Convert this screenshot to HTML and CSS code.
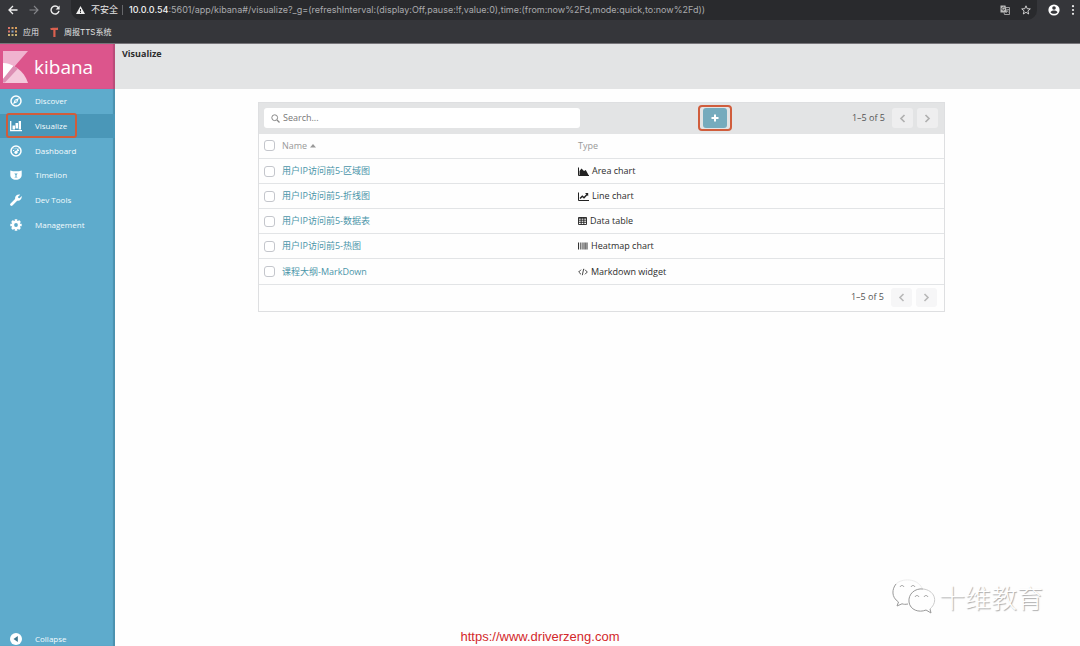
FILE: index.html
```html
<!DOCTYPE html>
<html lang="zh-CN">
<head>
<meta charset="utf-8">
<title>Visualize - Kibana</title>
<link rel="stylesheet" href="styles.css">
</head>
<body>
<header class="browser">
  <div class="browser-bar">
    <button class="chrome-btn" aria-label="Back"><svg width="10" height="10" viewBox="0 0 10 10"><path d="M9.5 5H1.2M5 1 1 5l4 4" fill="none" stroke="#eee" stroke-width="1.3"/></svg></button>
    <button class="chrome-btn" aria-label="Forward"><svg width="10" height="10" viewBox="0 0 10 10"><path d="M.5 5h8.3M5 1l4 4-4 4" fill="none" stroke="#85868a" stroke-width="1.1"/></svg></button>
    <button class="chrome-btn" aria-label="Reload"><svg width="10" height="10" viewBox="0 0 10 10"><path d="M8.3 2.6A4 4 0 1 0 9 5.8" fill="none" stroke="#eee" stroke-width="1.4"/><path d="M9.6.4v4H5.6z" fill="#eee"/></svg></button>
    <div class="omnibox">
      <svg width="9" height="8" viewBox="0 0 9 8"><path d="M4.5 0 9 8H0z" fill="#eee"/><path d="M4.5 3v2.400M4.5 6v1" stroke="#292a2d"/></svg>
      <span class="insecure">不安全</span>
      <span class="url"><b>10.0.0.54</b>:5601/app/kibana#/visualize?_g=(refreshInterval:(display:Off,pause:!f,value:0),time:(from:now%2Fd,mode:quick,to:now%2Fd))</span>
      <button class="chrome-btn" aria-label="Translate"><svg width="10" height="10" viewBox="0 0 10 10"><path d="M.5.5h5L7 7.500H.5z" fill="#bbb"/><path d="M6 2.500h3.500v7H4.500L4 7.500" fill="none" stroke="#bbb" stroke-width=".8"/><path d="M4.600 3A1.500 1.500 0 1 0 4.700 4.500H3.500" fill="none" stroke="#333" stroke-width=".8"/><path d="M6.500 4.500h2.500M7.800 4v.5M8.600 4.500 6.500 7.500M7 5.500l1.600 2" stroke="#bbb" stroke-width=".6"/></svg></button>
      <button class="chrome-btn" aria-label="Bookmark"><svg width="10" height="10" viewBox="0 0 10 10"><path d="M5 .8 6.200 3.700l3.100.2-2.400 2L7.700 9 5 7.300 2.300 9l.8-3.100-2.400-2 3.100-.2z" fill="none" stroke="#ddd" stroke-width=".9"/></svg></button>
    </div>
    <button class="chrome-btn" aria-label="Profile"><svg width="12" height="12" viewBox="0 0 12 12"><circle cx="6" cy="6" r="5.600" fill="#fff"/><circle cx="6" cy="4" r="1.800" fill="#35363a"/><path d="M2.500 8.300C3.300 6 8.700 6 9.500 8.300 8 10.300 4 10.300 2.500 8.300z" fill="#35363a"/></svg></button>
    <button class="chrome-btn" aria-label="Menu"><svg width="4" height="10" viewBox="0 0 4 10"><g fill="#eee"><circle cx="2" cy="1.200" r="1.100"/><circle cx="2" cy="5" r="1.100"/><circle cx="2" cy="8.800" r="1.100"/></g></svg></button>
  </div>
  <nav class="bookmarks">
    <a href="#"><svg width="9" height="9" viewBox="0 0 9 9"><path d="M0 1h2M0 4.500h2" stroke="#d8746a" stroke-width="2"/><path d="M3.500 1h2M7 1h2M7 4.500h2" stroke="#d9a05f" stroke-width="2"/><path d="M3.500 4.500h2" stroke="#8aa4c8" stroke-width="2"/><path d="M0 8h2M3.500 8h2M7 8h2" stroke="#c9b276" stroke-width="2"/></svg>应用</a>
    <a href="#"><svg width="8" height="10" viewBox="0 0 8 10"><path d="M0 1.500C2 0 5 1 8 .5V3L5.500 3v7H3.300V3H1z" fill="#d9604f"/></svg>周报TTS系统</a>
  </nav>
</header>
<div class="app">
  <aside class="sidebar">
    <a class="logo" href="#" aria-label="kibana">
      <svg width="25" height="32" viewBox="0 0 25 32"><path d="M0 0h25L11 16 0 28z" fill="#f0b3cf"/><path d="M0 12c10 1 21 7 25 20H0z" fill="#f4c9dc"/><path d="M0 12c4 0 7 1 10.500 3L0 28z" fill="#fff"/><path d="M10.500 15 15 17.500 2 31.500H0V28z" fill="#dc8fb4"/></svg>
      <span>kibana</span>
    </a>
    <nav class="menu">
      <a href="#"><svg width="12" height="12" viewBox="0 0 12 12"><circle cx="6" cy="6" r="5" fill="none" stroke="#fff" stroke-width="1.500"/><path d="M9 3 7.200 7.200 3 9l1.800-4.200z" fill="#fff"/><circle cx="6" cy="6" r=".8" fill="#5eabcc"/></svg>Discover</a>
      <a class="active" href="#"><svg width="12" height="12" viewBox="0 0 12 12"><path d="M.7 1v9.700H12" fill="none" stroke="#fff" stroke-width="1.300"/><path d="M2.500 5.500H5v4H2.500zM5.500 3H8v5.500H5.500zM8.700 1h2.300v8.500H8.700z" fill="#fff"/></svg>Visualize</a>
      <a href="#"><svg width="12" height="12" viewBox="0 0 12 12"><circle cx="6" cy="6" r="5" fill="none" stroke="#fff" stroke-width="1.500"/><path d="M3 5.500h1.200M4 3.500l.8.800M6 2.800v1M9 5.500H8" stroke="#fff"/><path d="M8.300 3.500 6.500 7" stroke="#fff" stroke-width="1.300"/><circle cx="6" cy="7.300" r="1.600" fill="#fff"/></svg>Dashboard</a>
      <a href="#"><svg width="12" height="12" viewBox="0 0 12 12"><path d="M.3 1.500 3 2.300h6l2.700-.8V6c0 3-2.500 4.800-5.700 4.800S.3 9 .3 6z" fill="#fff"/><path d="M4.300 4.500h3.400L6.500 6v1.800l1.300.8H4.200l1.300-.8V6z" fill="#5eabcc"/></svg>Timelion</a>
      <a href="#"><svg width="12" height="12" viewBox="0 0 12 12"><path d="M1.500 10.500 6 6" stroke="#fff" stroke-width="2.700" stroke-linecap="round"/><path d="M10.200.7 8 2.700l.3 1.200 1.300.3 2.100-2.100C12.200 5 9.700 7.500 7 6.600L5.200 5C4.500 2.300 7 0 10.200.7z" fill="#fff"/></svg>Dev Tools</a>
      <a href="#"><svg width="12" height="12" viewBox="0 0 12 12"><path d="M6 .3v11.400M.3 6h11.400M2 2l8 8M10 2l-8 8" stroke="#fff" stroke-width="2.600"/><circle cx="6" cy="6" r="4.300" fill="#fff"/><circle cx="6" cy="6" r="1.900" fill="#5eabcc"/></svg>Management</a>
      <span class="mark mark-nav"></span>
    </nav>
    <button class="collapse"><svg width="12" height="12" viewBox="0 0 12 12"><circle cx="6" cy="6" r="6" fill="#fff"/><path d="M7.800 3v6L3.500 6z" fill="#3f7890"/></svg>Collapse</button>
  </aside>
  <main class="main">
    <div class="page-head"><h1>Visualize</h1></div>
    <div class="content">
    <section class="panel">
      <div class="toolbar">
        <label class="search">
          <svg width="9" height="9" viewBox="0 0 9 9"><circle cx="3.700" cy="3.700" r="2.900" fill="none" stroke="#888" stroke-width="1"/><path d="m6 6 2.500 2.500" stroke="#888" stroke-width="1.200"/></svg>
          <input type="text" placeholder="Search..." aria-label="Search">
        </label>
        <div class="add-wrap"><button class="add" aria-label="Create new visualization"><svg width="8" height="8" viewBox="0 0 8 8"><path d="M4 .5v7M.5 4h7" stroke="#fff" stroke-width="2"/></svg></button><span class="mark mark-add"></span></div>
        <div class="pager"><span>1–5 of 5</span>
          <button aria-label="Previous page"><svg width="7" height="9" viewBox="0 0 7 9"><path d="M5.500 1 2 4.500 5.500 8" fill="none" stroke="#b0b0b0" stroke-width="1.700"/></svg></button>
          <button aria-label="Next page"><svg width="7" height="9" viewBox="0 0 7 9"><path d="M1.500 1 5 4.500 1.500 8" fill="none" stroke="#b0b0b0" stroke-width="1.700"/></svg></button>
        </div>
      </div>
      <table class="list">
        <thead><tr><th class="check"><input type="checkbox" aria-label="Select all"></th><th class="name">Name <svg width="6" height="4" viewBox="0 0 6 4"><path d="M3 0 6 3.500H0z" fill="#999"/></svg></th><th>Type</th></tr></thead>
        <tbody>
          <tr><td class="check"><input type="checkbox" aria-label="用户IP访问前5-区域图"></td><td><a href="#">用户IP访问前5-区域图</a></td><td><span class="type"><svg width="11" height="9" viewBox="0 0 11 9"><path d="M.5.500v8H11" fill="none" stroke="#222"/><path d="M1.500 8V4L3.500 1.500 6 4l1.800-1L10.500 8z" fill="#222"/></svg>Area chart</span></td></tr>
          <tr><td class="check"><input type="checkbox" aria-label="用户IP访问前5-折线图"></td><td><a href="#">用户IP访问前5-折线图</a></td><td><span class="type"><svg width="11" height="9" viewBox="0 0 11 9"><path d="M.5.500v8H11" fill="none" stroke="#222"/><path d="m2 6.500 2.300-2.300 1.700 1.500 3-3.200" fill="none" stroke="#222" stroke-width="1.400"/><path d="M7 1h3.200v3.200z" fill="#222"/></svg>Line chart</span></td></tr>
          <tr><td class="check"><input type="checkbox" aria-label="用户IP访问前5-数据表"></td><td><a href="#">用户IP访问前5-数据表</a></td><td><span class="type"><svg width="9" height="8" viewBox="0 0 9 8"><path d="M.5.500h8v7h-8zM.5 1.200h8M.5 3.200h8M.5 5.300h8M3.200.5v7M5.800.5v7" fill="none" stroke="#222" stroke-width=".9"/></svg>Data table</span></td></tr>
          <tr><td class="check"><input type="checkbox" aria-label="用户IP访问前5-热图"></td><td><a href="#">用户IP访问前5-热图</a></td><td><span class="type"><svg width="10" height="8" viewBox="0 0 10 8"><path d="M.5.500v7M6 .5v7M9 .5v7" stroke="#333"/><path d="M2.500.5v7M4.200.5v7M7.500.5v7" stroke="#777" stroke-width="1.200"/></svg>Heatmap chart</span></td></tr>
          <tr><td class="check"><input type="checkbox" aria-label="课程大纲-MarkDown"></td><td><a href="#">课程大纲-MarkDown</a></td><td><span class="type"><svg width="10" height="8" viewBox="0 0 10 8"><path d="M3 1.700.7 4 3 6.300M7 1.700 9.300 4 7 6.300M5.700.8 4.300 7.200" fill="none" stroke="#333" stroke-width=".9"/></svg>Markdown widget</span></td></tr>
        </tbody>
      </table>
      <div class="panel-foot">
        <div class="pager"><span>1–5 of 5</span>
          <button aria-label="Previous page"><svg width="7" height="9" viewBox="0 0 7 9"><path d="M5.500 1 2 4.500 5.500 8" fill="none" stroke="#b8b8b8" stroke-width="1.600"/></svg></button>
          <button aria-label="Next page"><svg width="7" height="9" viewBox="0 0 7 9"><path d="M1.500 1 5 4.500 1.500 8" fill="none" stroke="#b8b8b8" stroke-width="1.600"/></svg></button>
        </div>
      </div>
    </section>
    </div>
  </main>
</div>
<div class="watermark">
  <svg width="44" height="36" viewBox="0 0 44 36"><g fill="none" stroke="#999"><path d="M16 25c-3 .5-4 .4-6-.2L5 27l1.500-4C-1 18 0 10 4 5"/><path d="M4 5C10-1 25-1 30 9" stroke="#ececec"/><path d="M31 10c-8-1-15 5-14 13 1 8 10 11 17 8l5 3-1-4"/><path d="M31 10c11 1 16 12 7 20" stroke="#ccc"/><path d="M8 8c1-2 3-2 4 0M19 8c1-2 3-2 4 0M23 18c1-2 3-2 4 0M32 18c1-2 3-2 4 0"/></g></svg>
  <span>十维教育</span>
</div>
<a class="site-link" href="#">https://www.driverzeng.com</a>
</body>
</html>
```
FILE: styles.css
```css
* { box-sizing: border-box; }
body {
  margin: 0;
  min-height: 100vh;
  display: flex;
  flex-direction: column;
  background: #fefefe;
  color: #2d2d2d;
  font: 9px/16px "Open Sans", "Noto Sans CJK SC", sans-serif;
}
button { border: 0; padding: 0; background: none; font: inherit; color: inherit; }
a { color: inherit; text-decoration: none; }
svg { flex: none; display: block; }

.browser { background: #35363a; color: #e4e4e4; font-family: Inter, "Noto Sans CJK SC", sans-serif; border-bottom: 1px solid #77757a; }
.browser-bar { display: flex; align-items: center; height: 20px; padding: 0 5px 0 8px; gap: 11px; }
.chrome-btn { display: flex; flex: none; }
.omnibox { flex: 1; min-width: 0; display: flex; align-items: center; height: 20px; padding: 0 6px 0 5px; gap: 6px; background: #292a2d; border-radius: 0 0 10px 10px; }
.insecure { padding-right: 4px; border-right: 1px solid #66676a; line-height: 10px; white-space: nowrap; }
.url { flex: 1; min-width: 0; overflow: hidden; white-space: nowrap; color: #a9aaad; }
.url b { font-weight: 500; color: #f2f2f2; }
.omnibox .chrome-btn + .chrome-btn { margin-left: 5px; }
.bookmarks { display: flex; align-items: center; gap: 11px; height: 23px; padding: 0 8px; font-size: 8px; }
.bookmarks a { display: flex; align-items: center; gap: 6px; }

.app { flex: 1; display: flex; }
.sidebar { width: 115px; flex: none; display: flex; flex-direction: column; background: #5eabcc; color: #f4fbfd; box-shadow: inset -2px 0 1px #4b91ae; font-size: 8px; }
.logo { display: flex; align-items: center; gap: 6px; height: 45px; padding: 0 3px; background: #dc558c; color: #fff; font-size: 19px; font-weight: 500; box-shadow: inset -2px 0 1px #b84c78; }
.menu { position: relative; display: grid; grid-template-rows: repeat(6, 1fr); height: 148px; }
.menu a, .collapse { display: flex; align-items: center; gap: 13px; padding-left: 10px; }
.menu .active { background: #4a97b8; }
.collapse { margin-top: auto; height: 14px; text-align: left; }
.mark { position: absolute; border: 2px solid #d05d3c; border-radius: 3px; pointer-events: none; }
.mark-nav { left: 6px; top: 24px; width: 71px; height: 25px; }

.main { flex: 1; min-width: 0; }
.page-head { height: 45px; padding: 2px 7px; background: #e3e4e5; }
h1 { margin: 0; font-size: 9px; line-height: 16px; font-weight: 700; }
.content { padding: 13px 0 0 8px; }
.panel { max-width: 687px; margin: 0 auto; border: 1px solid #dedfe1; }
.toolbar { display: grid; grid-template-columns: 316px 1fr 1fr; align-items: center; height: 31px; padding: 0 6px 1px 5px; background: #e3e4e5; }
.search { display: flex; align-items: center; gap: 3px; height: 20px; padding: 0 7px; background: #fff; border-radius: 3px; }
.search input { flex: 1; min-width: 0; border: 0; padding: 0; background: none; outline: 0; font: inherit; }
.search input::placeholder { color: #777; }
.add-wrap { position: relative; justify-self: end; margin-right: 32px; }
.add { display: flex; align-items: center; justify-content: center; width: 24px; height: 20px; border-radius: 3px; background: #76abbd; }
.mark-add { inset: -3px -5px; border-radius: 4px; }
.pager { display: flex; align-items: center; justify-content: flex-end; gap: 4px; color: #555; }
.pager span { margin-right: 3px; }
.pager button { display: flex; align-items: center; justify-content: center; width: 21px; height: 20px; border-radius: 3px; background: #eeeeef; }
.list { width: 100%; border-collapse: collapse; table-layout: fixed; }
.list th, .list td { height: 25px; padding: 1px 0 0; text-align: left; border-bottom: 1px solid #e2e4e6; }
.list th { height: 24px; padding: 0; font-weight: 400; color: #999; }
.list th svg { display: inline-block; vertical-align: 1px; }
.list tbody tr:last-child td { height: 26px; }
.list .check { width: 23px; padding-left: 5px; }
.list .name { width: 296px; }
.list input { appearance: none; display: block; width: 11px; height: 11px; margin: 0; border: 1px solid #c4c6cc; border-radius: 3px; background: #fff; }
.list a { color: #4a95a9; }
.type { display: flex; align-items: center; gap: 3px; }
.panel-foot { height: 26px; padding: 3px 7px; }
.panel-foot .pager button { background: #f6f6f7; height: 19px; }

.watermark { position: absolute; right: 37px; bottom: 31px; display: flex; align-items: center; gap: 3px; color: #fff; font-family: "Noto Sans CJK SC", sans-serif; font-size: 26px; line-height: 36px; font-weight: 300; text-shadow: 1px 1px 1px #aaa; }
.site-link { position: absolute; left: 0; right: 0; bottom: 1px; width: max-content; margin: 0 auto; color: #d3282b; font: 13px/16px "Liberation Sans", sans-serif; }
```
